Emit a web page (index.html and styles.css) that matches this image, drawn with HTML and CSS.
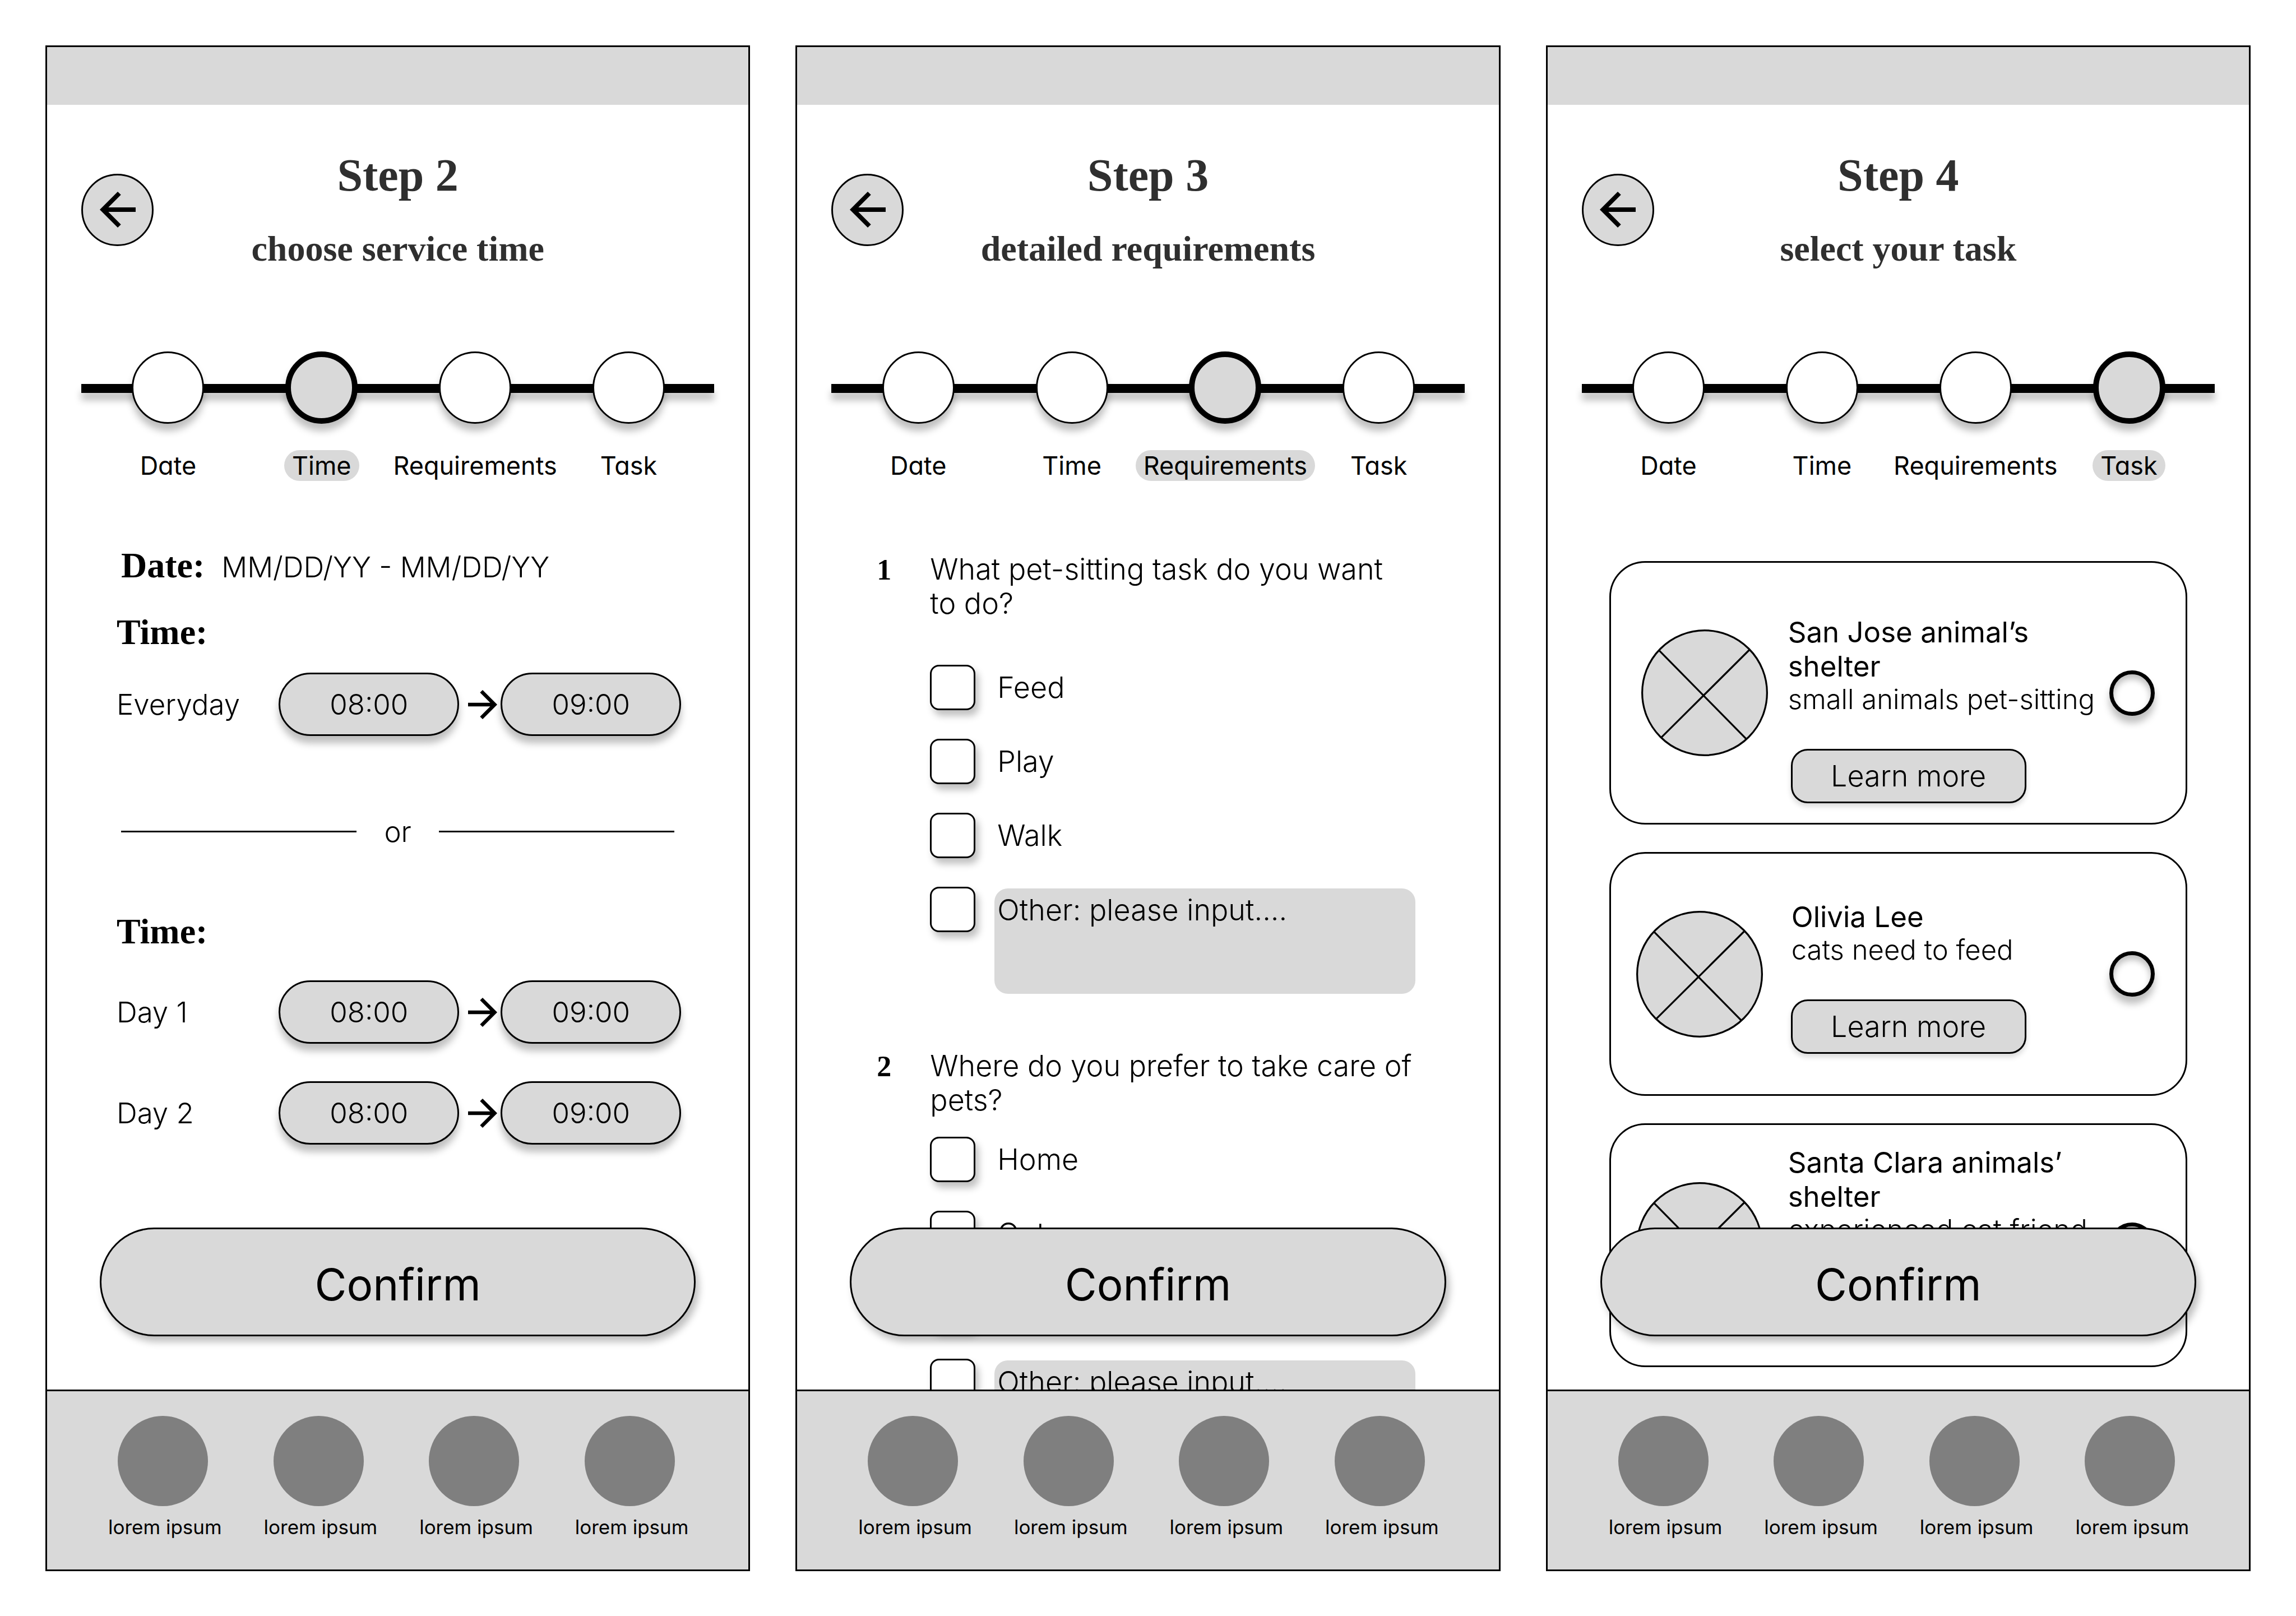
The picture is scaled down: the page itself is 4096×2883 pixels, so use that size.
FILE: index.html
```html
<!DOCTYPE html>
<html lang="en">
<head>
<meta charset="utf-8">
<title>Pet-sitting booking wireframes</title>
<meta name="viewport" content="width=device-width, initial-scale=1">
<link rel="stylesheet" href="styles.css">
</head>
<body>
<svg class="sprite" aria-hidden="true">
  <symbol id="arrow-left" viewBox="0 0 16 16"><path d="M3.83 9l5.6 5.6L8 16 0 8l8-8 1.43 1.4L3.83 7H16v2z"/></symbol>
  <symbol id="arrow-right" viewBox="0 0 16 16"><path d="M12.17 9l-5.6 5.6L8 16l8-8-8-8-1.43 1.4L12.17 7H0v2z"/></symbol>
  <symbol id="placeholder" viewBox="0 0 280 280"><circle cx="140" cy="140" r="138"/><path d="M40 47L233 243M240 44L44 239"/></symbol>
</svg>
<main class="board">

  <section class="screen">
    <div class="statusbar"></div>
    <header class="header">
      <button class="back" type="button" aria-label="Back"><svg><use href="#arrow-left"/></svg></button>
      <div class="titles">
        <h1 class="title">Step 2</h1>
        <p class="subtitle">choose service time</p>
      </div>
    </header>
    <ol class="stepper">
      <li class="step"><span class="dot"></span><span class="step-name">Date</span></li>
      <li class="step step--current"><span class="dot"></span><span class="step-name">Time</span></li>
      <li class="step"><span class="dot"></span><span class="step-name">Requirements</span></li>
      <li class="step"><span class="dot"></span><span class="step-name">Task</span></li>
    </ol>
    <div class="content">
      <form class="times">
        <p class="date-row"><span class="heading">Date:</span><span>MM/DD/YY - MM/DD/YY</span></p>
        <fieldset class="slots slots--daily">
          <legend class="heading">Time:</legend>
          <div class="slot">
            <label for="every-from">Everyday</label>
            <input class="time" id="every-from" type="text" value="08:00">
            <svg class="to"><use href="#arrow-right"/></svg>
            <input class="time" type="text" value="09:00" aria-label="Everyday, until">
          </div>
        </fieldset>
        <div class="divider">or</div>
        <fieldset class="slots">
          <legend class="heading">Time:</legend>
          <div class="slot">
            <label for="day1-from">Day 1</label>
            <input class="time" id="day1-from" type="text" value="08:00">
            <svg class="to"><use href="#arrow-right"/></svg>
            <input class="time" type="text" value="09:00" aria-label="Day 1, until">
          </div>
          <div class="slot">
            <label for="day2-from">Day 2</label>
            <input class="time" id="day2-from" type="text" value="08:00">
            <svg class="to"><use href="#arrow-right"/></svg>
            <input class="time" type="text" value="09:00" aria-label="Day 2, until">
          </div>
        </fieldset>
      </form>
      <button class="confirm" type="button">Confirm</button>
    </div>
    <nav class="tabbar">
      <a class="tab" href="#"><span class="tab-icon"></span>lorem ipsum</a>
      <a class="tab" href="#"><span class="tab-icon"></span>lorem ipsum</a>
      <a class="tab" href="#"><span class="tab-icon"></span>lorem ipsum</a>
      <a class="tab" href="#"><span class="tab-icon"></span>lorem ipsum</a>
    </nav>
  </section>

  <section class="screen">
    <div class="statusbar"></div>
    <header class="header">
      <button class="back" type="button" aria-label="Back"><svg><use href="#arrow-left"/></svg></button>
      <div class="titles">
        <h1 class="title">Step 3</h1>
        <p class="subtitle">detailed requirements</p>
      </div>
    </header>
    <ol class="stepper">
      <li class="step"><span class="dot"></span><span class="step-name">Date</span></li>
      <li class="step"><span class="dot"></span><span class="step-name">Time</span></li>
      <li class="step step--current"><span class="dot"></span><span class="step-name">Requirements</span></li>
      <li class="step"><span class="dot"></span><span class="step-name">Task</span></li>
    </ol>
    <div class="content">
      <form class="questions">
        <div class="question">
          <span class="number">1</span>
          <div>
            <p class="ask">What pet-sitting task do you want to do?</p>
            <div class="options options--spaced">
              <label class="option"><input class="check" type="checkbox"><span>Feed</span></label>
              <label class="option"><input class="check" type="checkbox"><span>Play</span></label>
              <label class="option"><input class="check" type="checkbox"><span>Walk</span></label>
              <div class="option option--other"><input class="check" type="checkbox" aria-label="Other task"><textarea class="other" placeholder="Other: please input...." aria-label="Describe the other task"></textarea></div>
            </div>
          </div>
        </div>
        <div class="question">
          <span class="number">2</span>
          <div>
            <p class="ask">Where do you prefer to take care of pets?</p>
            <div class="options">
              <label class="option"><input class="check" type="checkbox"><span>Home</span></label>
              <label class="option"><input class="check" type="checkbox"><span>Out</span></label>
              <div class="option"><input class="check" type="checkbox" aria-label="Both"></div>
              <div class="option option--other"><input class="check" type="checkbox" aria-label="Other place"><textarea class="other" placeholder="Other: please input...." aria-label="Describe the other place"></textarea></div>
            </div>
          </div>
        </div>
      </form>
      <button class="confirm" type="button">Confirm</button>
    </div>
    <nav class="tabbar">
      <a class="tab" href="#"><span class="tab-icon"></span>lorem ipsum</a>
      <a class="tab" href="#"><span class="tab-icon"></span>lorem ipsum</a>
      <a class="tab" href="#"><span class="tab-icon"></span>lorem ipsum</a>
      <a class="tab" href="#"><span class="tab-icon"></span>lorem ipsum</a>
    </nav>
  </section>

  <section class="screen">
    <div class="statusbar"></div>
    <header class="header">
      <button class="back" type="button" aria-label="Back"><svg><use href="#arrow-left"/></svg></button>
      <div class="titles">
        <h1 class="title">Step 4</h1>
        <p class="subtitle">select your task</p>
      </div>
    </header>
    <ol class="stepper">
      <li class="step"><span class="dot"></span><span class="step-name">Date</span></li>
      <li class="step"><span class="dot"></span><span class="step-name">Time</span></li>
      <li class="step"><span class="dot"></span><span class="step-name">Requirements</span></li>
      <li class="step step--current"><span class="dot"></span><span class="step-name">Task</span></li>
    </ol>
    <div class="content">
      <form class="tasks">
        <article class="task task--featured">
          <svg class="avatar"><use href="#placeholder"/></svg>
          <div class="task-body">
            <label class="task-text" for="task-1"><span class="task-name">San Jose animal’s shelter</span><span class="task-note">small animals pet-sitting</span></label>
            <button class="learn" type="button">Learn more</button>
          </div>
          <input class="radio" id="task-1" type="radio" name="task">
        </article>
        <article class="task task--person">
          <svg class="avatar"><use href="#placeholder"/></svg>
          <div class="task-body">
            <label class="task-text" for="task-2"><span class="task-name">Olivia Lee</span><span class="task-note">cats need to feed</span></label>
            <button class="learn" type="button">Learn more</button>
          </div>
          <input class="radio" id="task-2" type="radio" name="task">
        </article>
        <article class="task task--short">
          <svg class="avatar"><use href="#placeholder"/></svg>
          <div class="task-body">
            <label class="task-text" for="task-3"><span class="task-name">Santa Clara animals’ shelter</span><span class="task-note">experienced cat friend</span></label>
          </div>
          <input class="radio" id="task-3" type="radio" name="task">
        </article>
      </form>
      <button class="confirm" type="button">Confirm</button>
    </div>
    <nav class="tabbar">
      <a class="tab" href="#"><span class="tab-icon"></span>lorem ipsum</a>
      <a class="tab" href="#"><span class="tab-icon"></span>lorem ipsum</a>
      <a class="tab" href="#"><span class="tab-icon"></span>lorem ipsum</a>
      <a class="tab" href="#"><span class="tab-icon"></span>lorem ipsum</a>
    </nav>
  </section>

</main>
</body>
</html>
```
FILE: styles.css
```css
:root {
  --fill: #d9d9d9;
  --line: 3px solid #000;
  --drop: 0 13px 13px rgba(0, 0, 0, 0.25);
  --lift: 6px 10px 13px rgba(0, 0, 0, 0.25);
  --serif: "Liberation Serif", "Times New Roman", serif;
  --sans: Inter, "Liberation Sans", sans-serif;
}

* {
  box-sizing: border-box;
}

body {
  margin: 0;
  background: #fff;
  color: #000;
  font: 300 52px/61px var(--sans);
}

h1, p, ol, fieldset, legend {
  margin: 0;
  padding: 0;
  border: 0;
}

button, input, textarea {
  margin: 0;
  color: inherit;
  font: inherit;
}

.sprite {
  position: absolute;
  width: 0;
  height: 0;
}

.board {
  display: flex;
  gap: 81px;
  min-height: 100vh;
  padding: 81px 81px 80px;
}

.screen {
  display: flex;
  flex: 1;
  flex-direction: column;
  min-width: 0;
  border: var(--line);
}

.statusbar {
  height: 103px;
  background: var(--fill);
}

/* Header */

.header {
  display: grid;
  grid-template-columns: 129px 1fr 129px;
  align-items: center;
  padding: 80px 61px 0;
}

.back {
  display: grid;
  place-items: center;
  height: 129px;
  padding: 0;
  border: var(--line);
  border-radius: 50%;
  background: var(--fill);
}

.back svg {
  width: 64px;
  height: 64px;
}

.titles {
  display: grid;
  gap: 48px;
  color: #2f2f2f;
  font-family: var(--serif);
  font-weight: 700;
  text-align: center;
}

.title {
  font-size: 82px;
  line-height: 92px;
}

.subtitle {
  font-size: 64px;
  line-height: 74px;
}

/* Stepper */

.stepper {
  position: relative;
  display: flex;
  margin-top: 146px;
  padding: 0 77px 0 79px;
  list-style: none;
}

.stepper::before {
  content: "";
  position: absolute;
  top: 58px;
  right: 61px;
  left: 61px;
  height: 16px;
  background: #000;
  box-shadow: var(--drop);
}

.step {
  position: relative;
  display: flex;
  flex: 1;
  flex-direction: column;
  align-items: center;
  gap: 47px;
  width: 0;
}

.dot {
  width: 129px;
  height: 129px;
  border: var(--line);
  border-radius: 50%;
  background: #fff;
  box-shadow: var(--drop);
}

.step-name {
  padding: 0 14px;
  border-radius: 28px;
  font-size: 45px;
  font-weight: 400;
  font-feature-settings: "cv11";
  line-height: 55px;
}

.step--current .dot {
  border-width: 10px;
  background: var(--fill);
}

.step--current .step-name {
  background: var(--fill);
}

.content {
  position: relative;
  flex: 1 1 0;
  min-height: 0;
  overflow: hidden;
}

.confirm {
  position: absolute;
  right: 94px;
  bottom: 95px;
  left: 94px;
  height: 194px;
  padding: 8px 0 0;
  border: var(--line);
  border-radius: 97px;
  background: var(--fill);
  box-shadow: var(--lift);
  font-size: 78px;
  font-weight: 400;
}

.heading {
  font: 700 64px/74px var(--serif);
}

/* Step 2: service time */

.times {
  padding: 114px 120px 0 124px;
  font-size: 51px;
}

.date-row {
  display: flex;
  align-items: baseline;
  gap: 30px;
  padding-left: 8px;
}

.slots {
  display: grid;
  gap: 67px;
}

.slots .heading {
  margin-bottom: 50px;
}

.slots--daily {
  margin-top: 45px;
}

.slots--daily .heading {
  margin-bottom: 35px;
}

.slot {
  display: grid;
  grid-template-columns: 1fr 322px 74px 322px;
  align-items: center;
}

.time {
  width: 100%;
  height: 113px;
  padding: 0;
  border: var(--line);
  border-radius: 57px;
  background: var(--fill);
  box-shadow: var(--drop);
  text-align: center;
}

.to {
  justify-self: end;
  width: 52px;
  height: 52px;
  margin-right: 6px;
}

.divider {
  display: flex;
  align-items: center;
  justify-content: space-between;
  margin: 140px 12px 111px 8px;
}

.divider::before,
.divider::after {
  content: "";
  width: 420px;
  border-top: var(--line);
}

/* Step 3: requirements */

.questions {
  display: grid;
  gap: 98px;
  padding: 127px 149px 0 142px;
}

.question {
  display: grid;
  grid-template-columns: 95px 1fr;
  align-items: baseline;
}

.number {
  font: 700 52px/61px var(--serif);
}

.options {
  display: grid;
  gap: 51px;
  margin-top: 35px;
}

.options--spaced {
  margin-top: 79px;
}

.option {
  display: flex;
  align-items: center;
  gap: 34px;
}

.option span {
  padding-left: 5px;
}

.option--other {
  align-items: flex-start;
}

.check {
  flex: none;
  width: 81px;
  height: 81px;
  border: var(--line);
  border-radius: 16px;
  appearance: none;
  background: #fff;
  box-shadow: var(--lift);
}

.other {
  display: block;
  flex: 1;
  min-width: 0;
  height: 188px;
  margin-top: 3px;
  padding: 8px 5px;
  border: 0;
  border-radius: 24px;
  background: var(--fill);
  resize: none;
}

.other::placeholder {
  color: #000;
  opacity: 1;
}

/* Step 4: tasks */

.tasks {
  display: grid;
  gap: 49px;
  padding: 143px 110px 0;
}

.task {
  display: grid;
  grid-template-columns: 271px 1fr 81px;
  align-items: center;
  padding: 0 55px 0 45px;
  border: var(--line);
  border-radius: 64px;
}

.task--featured {
  grid-template-columns: 262px 1fr 81px;
  padding-left: 54px;
}

.task--person .task-text {
  padding-left: 6px;
}

.avatar {
  width: 226px;
  height: 226px;
  fill: var(--fill);
  stroke: #000;
  stroke-width: 4px;
}

.task-body {
  display: grid;
  gap: 60px;
}

.task--featured .task-body {
  padding: 93px 0 35px;
}

.task--person .task-body {
  padding: 82px 0 72px;
}

.task--short .task-body {
  padding: 36px 0 214px;
}

.task-text {
  display: grid;
}

.task-name {
  font-size: 51px;
  font-weight: 400;
}

.task-note {
  font-size: 49px;
  line-height: 57px;
  white-space: nowrap;
}

.task--short .task-note {
  font-size: 51px;
}

.learn {
  width: 420px;
  height: 97px;
  margin-left: 5px;
  padding: 0;
  border: var(--line);
  border-radius: 30px;
  background: var(--fill);
  box-shadow: 0 6px 10px rgba(0, 0, 0, 0.15);
}

.radio {
  width: 81px;
  height: 81px;
  border: 7px solid #000;
  border-radius: 50%;
  appearance: none;
  background: #fff;
  box-shadow: var(--drop), inset 0 8px 12px rgba(0, 0, 0, 0.25);
}

/* Tab bar */

.tabbar {
  display: flex;
  padding: 44px 32px 54px 109px;
  border-top: var(--line);
  background: var(--fill);
}

.tab {
  display: grid;
  flex: 1;
  justify-items: start;
  gap: 15px;
  color: inherit;
  font-size: 35px;
  font-weight: 400;
  line-height: 44px;
  text-decoration: none;
}

.tab-icon {
  width: 161px;
  height: 161px;
  margin-left: 17px;
  border-radius: 50%;
  background: #7f7f7f;
}
```
